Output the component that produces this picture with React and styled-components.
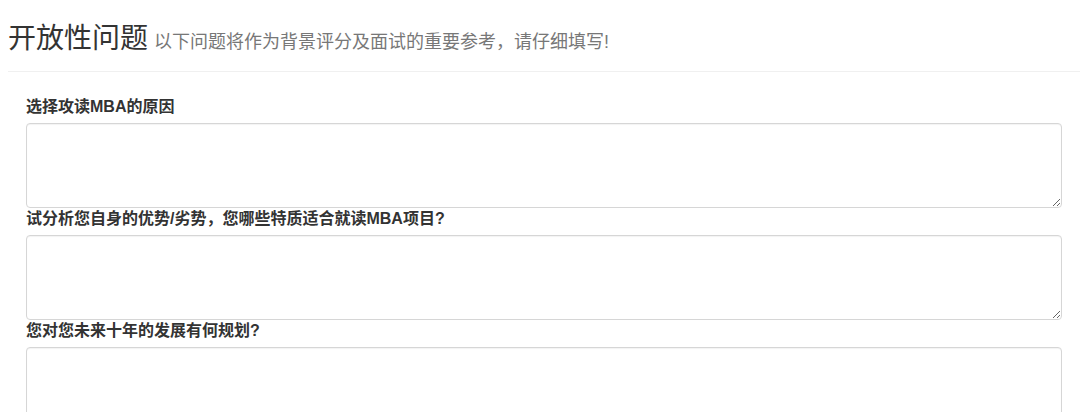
import React from 'react';
import styled, { createGlobalStyle } from 'styled-components';

const GlobalStyle = createGlobalStyle`
  html, body {
    margin: 0;
    padding: 0;
    background: #fff;
  }
  body {
    font-family: "Helvetica Neue", "Liberation Sans", Arial, "Noto Sans CJK SC", sans-serif;
    color: #333;
  }
`;

const Page = styled.div`
  width: 1080px;
`;

const Header = styled.div`
  margin-left: 8px;
  padding: 15px 0 5px;
  border-bottom: 1px solid #f0f0f0;
`;

const Title = styled.h3`
  margin: 0;
  font-size: 28px;
  font-weight: 400;
  line-height: 47px;
  color: #333;
`;

const Sub = styled.small`
  font-size: 18px;
  color: #777;
  margin-left: 6px;
`;

const Form = styled.div`
  padding: 24px 18px 0 26px;
`;

const Group = styled.div`
  margin: 0;
`;

const Label = styled.label`
  display: block;
  font-size: 16px;
  font-weight: 700;
  line-height: 22px;
  margin-bottom: 5px;
  color: #333;
`;

const Area = styled.textarea`
  display: block;
  width: 100%;
  height: 85px;
  box-sizing: border-box;
  padding: 6px 12px;
  font-size: 14px;
  border: 1px solid #d6d6d6;
  border-radius: 4px;
  box-shadow: inset 0 1px 1px rgba(0, 0, 0, 0.05);
  outline: none;
`;

const questions = [
  '选择攻读MBA的原因',
  '试分析您自身的优势/劣势，您哪些特质适合就读MBA项目?',
  '您对您未来十年的发展有何规划?'
];

export default function App() {
  return (
    <Page>
      <GlobalStyle />
      <Header>
        <Title>
          开放性问题<Sub>以下问题将作为背景评分及面试的重要参考，请仔细填写!</Sub>
        </Title>
      </Header>
      <Form>
        {questions.map((q, i) => (
          <Group key={i}>
            <Label>{q}</Label>
            <Area />
          </Group>
        ))}
      </Form>
    </Page>
  );
}
